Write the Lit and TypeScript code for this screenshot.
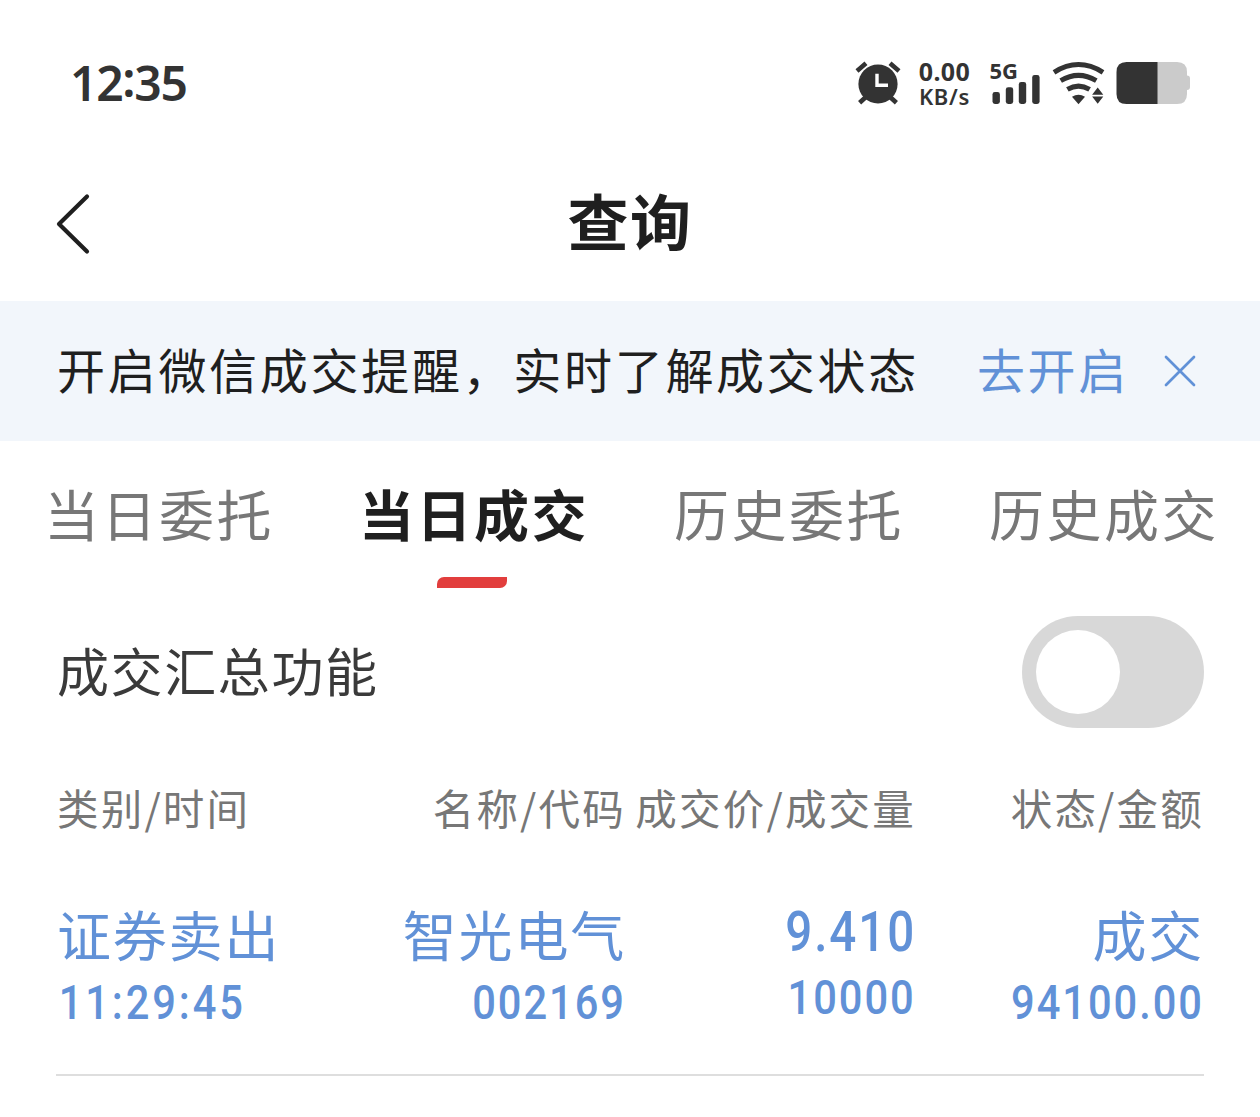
import { LitElement, html, css } from 'lit';
import { customElement, property, state } from 'lit/decorators.js';
import { classMap } from 'lit/directives/class-map.js';

interface Deal {
  type: string;
  time: string;
  name: string;
  code: string;
  price: string;
  volume: string;
  status: string;
  amount: string;
}

@customElement('status-bar')
export class StatusBar extends LitElement {
  static styles = css`
    :host {
      display: flex;
      align-items: flex-start;
      justify-content: space-between;
      box-sizing: border-box;
      height: 147px;
      padding: 58px 70px 0 70px;
      color: #333;
      font-family: 'Noto Sans', sans-serif;
    }

    .clock {
      font-size: 48px;
      font-weight: 600;
      line-height: 50px;
      letter-spacing: -1.3px;
    }

    .colon {
      position: relative;
      top: -4px;
    }

    .icons {
      display: flex;
      align-items: flex-start;
    }

    svg {
      display: block;
    }

    .alarm {
      margin-right: 16px;
    }

    .speed {
      display: flex;
      flex-direction: column;
      align-items: center;
      width: 55px;
      margin-right: 17px;
      font-weight: 700;
      white-space: nowrap;
    }

    .rate {
      font-size: 25px;
      line-height: 27px;
      letter-spacing: 0.4px;
    }

    .unit {
      font-size: 22px;
      font-weight: 600;
      line-height: 22px;
      letter-spacing: 0.7px;
    }

    .network {
      font-size: 22px;
      font-weight: 700;
    }

    .signal {
      margin-right: 12px;
    }

    .wifi {
      margin-right: 11px;
    }
  `;

  render() {
    return html`
      <div class="clock">12<span class="colon">:</span>35</div>
      <div class="icons">
        <svg class="alarm" width="46" height="50" viewBox="855 58 46 50">
          <g stroke="#333" stroke-width="4.6" stroke-linecap="butt" fill="none">
            <path d="M857 70.9 866 63.3M890 63.3 899 70.9" />
            <path d="M859.6 102.8 867 96M896.4 102.8 889 96" />
          </g>
          <circle cx="878" cy="84" r="19.6" fill="#333" />
          <path d="M877 73.8V85.2H888" stroke="#fff" stroke-width="3.4" fill="none" />
        </svg>
        <div class="speed">
          <span class="rate">0.00</span>
          <span class="unit">KB/s</span>
        </div>
        <svg class="signal" width="51" height="50" viewBox="989 58 51 50" fill="#333">
          <text class="network" x="989.5" y="78.5" textLength="28.5" lengthAdjust="spacingAndGlyphs">5G</text>
          <rect x="992.5" y="92" width="7.4" height="12" rx="2.4" />
          <rect x="1005.8" y="87.3" width="7.4" height="16.7" rx="2.4" />
          <rect x="1018.8" y="82" width="7.4" height="22" rx="2.4" />
          <rect x="1032.2" y="75" width="7.4" height="29" rx="2.4" />
        </svg>
        <svg class="wifi" width="53" height="50" viewBox="1052 58 53 50" fill="none">
          <g stroke="#333" stroke-width="5">
            <path d="M1054 72.3Q1078.5 56.8 1103 72.3" />
            <path d="M1060.7 80.6Q1078.5 70.2 1096.3 80.6" />
            <path d="M1067.4 89.4Q1078.5 82.8 1089.6 89.4" />
          </g>
          <path d="M1072 96.8Q1078.5 92.6 1085 96.8L1078.5 104.2Z" fill="#333" />
          <path d="M1097.7 87.5 1103.3 94.7H1092.1ZM1092.1 96.5H1103.3L1097.7 103.8Z" fill="#333" />
        </svg>
        <svg class="battery" width="74" height="50" viewBox="1116 58 74 50">
          <path
            d="M1157 62H1177Q1187 62 1187 72V75.5Q1190 75.5 1190 78.5V87Q1190 90 1187 90V94Q1187 104 1177 104H1157Z"
            fill="#cbcbcb"
          />
          <path d="M1157.5 62H1126.5Q1116.5 62 1116.5 72V94Q1116.5 104 1126.5 104H1157.5Z" fill="#333" />
        </svg>
      </div>
    `;
  }
}

@customElement('toggle-switch')
export class ToggleSwitch extends LitElement {
  @property({ type: Boolean, reflect: true }) checked = false;

  static styles = css`
    :host {
      display: flex;
      box-sizing: border-box;
      width: 182px;
      height: 112px;
      padding: 14px;
      border-radius: 56px;
      background: #d8d8d8;
    }

    :host([checked]) {
      justify-content: flex-end;
      background: #e23e3d;
    }

    .knob {
      width: 84px;
      height: 84px;
      border-radius: 50%;
      background: #fff;
    }
  `;

  render() {
    return html`<div class="knob" @click=${() => (this.checked = !this.checked)}></div>`;
  }
}

@customElement('app-root')
export class AppRoot extends LitElement {
  @state() private activeTab = 1;

  private tabs = ['当日委托', '当日成交', '历史委托', '历史成交'];

  private columns = ['类别/时间', '名称/代码', '成交价/成交量', '状态/金额'];

  private deals: Deal[] = [
    {
      type: '证券卖出',
      time: '11:29:45',
      name: '智光电气',
      code: '002169',
      price: '9.410',
      volume: '10000',
      status: '成交',
      amount: '94100.00',
    },
  ];

  static styles = css`
    :host {
      display: block;
      height: 1117px;
      overflow: hidden;
      background: #fff;
      color: #1f1f1f;
      font-family: 'Noto Sans CJK SC', sans-serif;
      white-space: nowrap;
    }

    svg {
      display: block;
    }

    .nav {
      display: grid;
      grid-template-columns: 1fr auto 1fr;
      align-items: center;
      height: 154px;
      padding: 0 56px;
    }

    .title {
      margin: 0;
      padding-bottom: 8px;
      font-size: 61px;
      font-weight: 700;
      line-height: 80px;
      letter-spacing: 1.5px;
    }

    .banner {
      display: flex;
      align-items: center;
      height: 140px;
      padding: 0 64px 0 57px;
      background: #f2f6fb;
      font-size: 48px;
      letter-spacing: 2.7px;
    }

    .message {
      flex: 1;
    }

    .action {
      margin-right: 35px;
      color: #6191d7;
    }

    .message,
    .action {
      line-height: 70px;
      padding-bottom: 7px;
    }

    .tabs {
      display: grid;
      grid-template-columns: repeat(4, 1fr);
      height: 147px;
    }

    .tab {
      display: flex;
      flex-direction: column;
      align-items: center;
      justify-content: space-between;
      padding-top: 31px;
      color: #777;
      font-size: 55px;
      line-height: 80px;
      letter-spacing: 2.5px;
    }

    .tab span {
      padding-left: 3px;
    }

    .tab.active {
      color: #1f1f1f;
      font-weight: 700;
    }

    .tab.active::after {
      content: '';
      width: 70px;
      height: 11px;
      margin-right: 1px;
      border-radius: 7px 0 7px 0;
      background: #e23e3d;
    }

    .summary {
      display: flex;
      align-items: center;
      justify-content: space-between;
      height: 112px;
      padding: 28px 56px 0 57px;
    }

    .label {
      padding-bottom: 4px;
      color: #3a3a3a;
      font-size: 52px;
      line-height: 80px;
      letter-spacing: 1.6px;
    }

    .row {
      display: grid;
      grid-template-columns: 287px 283px 290px 288px;
      margin: 0 56px;
    }

    .cell {
      display: flex;
      flex-direction: column;
      align-items: flex-end;
    }

    .cell:first-child {
      align-items: flex-start;
      padding-left: 1px;
    }

    .head {
      height: 150px;
      padding-top: 49px;
      box-sizing: border-box;
      color: #777;
      font-size: 41.5px;
      line-height: 60px;
      letter-spacing: 2.2px;
    }

    .deal {
      box-sizing: border-box;
      height: 198px;
      padding-top: 16px;
      border-bottom: 2px solid #dedede;
      color: #6191d7;
    }

    .primary {
      font-size: 54px;
      line-height: 80px;
      letter-spacing: 1.8px;
    }

    /* Condensed digits, anchored to the aligned edge of their column */
    .number {
      font-family: Roboto, sans-serif;
      font-size: 49px;
      font-weight: 500;
      line-height: 56px;
      letter-spacing: 2.3px;
      transform: scaleX(0.85);
      transform-origin: right center;
    }

    .primary + .number {
      margin-top: 1px;
    }

    .cell:first-child .number {
      padding-left: 2px;
      letter-spacing: 3.4px;
      transform-origin: left center;
    }

    .price {
      font-size: 56px;
      line-height: 76px;
    }
  `;

  render() {
    return html`
      <status-bar></status-bar>
      <header class="nav">
        <svg width="36" height="64" viewBox="56 192 36 64" fill="none">
          <path
            d="M87 196.5 59 224 87 251.5"
            stroke="#1f1f1f"
            stroke-width="4.2"
            stroke-linecap="round"
            stroke-linejoin="round"
          />
        </svg>
        <h1 class="title">查询</h1>
      </header>
      <section class="banner">
        <span class="message">开启微信成交提醒，实时了解成交状态</span>
        <span class="action">去开启</span>
        <svg width="32" height="32" viewBox="0 0 32 32" fill="none">
          <path d="M2 2 30 30M30 2 2 30" stroke="#6191d7" stroke-width="2.7" stroke-linecap="round" />
        </svg>
      </section>
      <nav class="tabs">
        ${this.tabs.map(
          (tab, i) => html`
            <div
              class=${classMap({ tab: true, active: i === this.activeTab })}
              @click=${() => (this.activeTab = i)}
            >
              <span>${tab}</span>
            </div>
          `
        )}
      </nav>
      <section class="summary">
        <span class="label">成交汇总功能</span>
        <toggle-switch></toggle-switch>
      </section>
      <div class="row head">${this.columns.map((name) => html`<div class="cell">${name}</div>`)}</div>
      ${this.deals.map(
        (deal) => html`
          <div class="row deal">
            <div class="cell">
              <span class="primary">${deal.type}</span>
              <span class="number">${deal.time}</span>
            </div>
            <div class="cell">
              <span class="primary">${deal.name}</span>
              <span class="number">${deal.code}</span>
            </div>
            <div class="cell">
              <span class="number price">${deal.price}</span>
              <span class="number">${deal.volume}</span>
            </div>
            <div class="cell">
              <span class="primary">${deal.status}</span>
              <span class="number">${deal.amount}</span>
            </div>
          </div>
        `
      )}
    `;
  }
}
